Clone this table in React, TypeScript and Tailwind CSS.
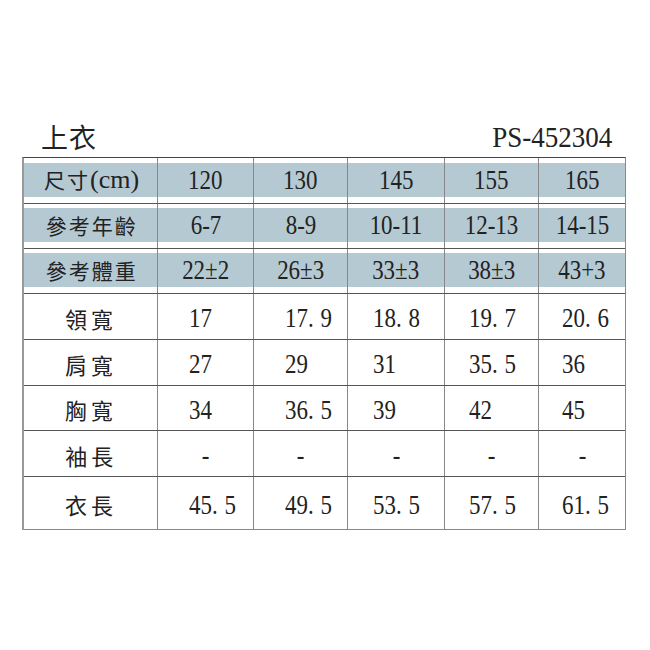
import React from 'react';

const cjk = "font-['Noto_Sans_CJK_TC','Noto_Sans_CJK_JP',sans-serif]";
const serif = "font-['Liberation_Serif',serif]";

const colWidths = ['w-[134px]', 'w-[96px]', 'w-[95px]', 'w-[97px]', 'w-[95px]', 'w-[87px]'];
const dataPad = ['pl-[31px]', 'pl-[31px]', 'pl-[25px]', 'pl-[24px]', 'pl-[23px]'];

const headerRows = [
  { label: '尺寸', unit: '(cm)', values: ['120', '130', '145', '155', '165'], pt: 'pt-[5px]' },
  { label: '參考年齡', values: ['6-7', '8-9', '10-11', '12-13', '14-15'], pt: 'pt-[4px]' },
  { label: '參考體重', values: ['22±2', '26±3', '33±3', '38±3', '43+3'], pt: 'pt-[4px]' },
];

const sizeRows = [
  { label: '領寬', values: ['17', '17.9', '18.8', '19.7', '20.6'], h: 'h-[46px]' },
  { label: '肩寬', values: ['27', '29', '31', '35.5', '36'], h: 'h-[46px]' },
  { label: '胸寬', values: ['34', '36.5', '39', '42', '45'], h: 'h-[45px]' },
  { label: '袖長', values: ['-', '-', '-', '-', '-'], h: 'h-[46px]' },
  { label: '衣長', values: ['45.5', '49.5', '53.5', '57.5', '61.5'], h: 'h-[53px]' },
];

const Num = ({ text, left }: { text: string; left?: boolean }) => {
  const parts = text.split('.');
  return (
    <span
      className={`inline-block ${serif} text-[27px] leading-none text-[#222] scale-x-[0.85] ${
        left ? 'origin-left' : 'origin-center'
      }`}
    >
      {parts.length > 1 ? (
        <>
          {parts[0]}
          <span className="pr-[8px]">.</span>
          {parts[1]}
        </>
      ) : (
        text
      )}
    </span>
  );
};

export default function App() {
  return (
    <div className="w-[650px] h-[650px] bg-white">
      <div className="ml-[22px] w-[604px] pt-[116px]">
        <div className="flex items-center justify-between h-[41px] pl-[19px] pr-[14px]">
          <span className={`${cjk} text-[27px] leading-none text-[#222] tracking-[1px]`}>上衣</span>
          <span className={`${serif} text-[30px] leading-none text-[#222] inline-block scale-x-[0.9] origin-right`}>
            PS-452304
          </span>
        </div>

        <div className="border-t border-[#444] border-l-2 border-l-[#999] border-r border-r-[#888]">
          {headerRows.map((row, ri) => (
            <div key={ri} className="flex border-b border-[#555]">
              {[null, ...row.values].map((v, ci) => (
                <div
                  key={ci}
                  className={`${colWidths[ci]} ${row.pt} pb-[6px] ${ci > 0 ? 'border-l border-[#888]' : ''}`}
                >
                  <div className="h-[34px] bg-[#b5c9d2] flex items-center justify-center">
                    {ci === 0 ? (
                      <span className={`${cjk} text-[21px] leading-none tracking-[2px] text-[#222] pl-[2px]`}>
                        {row.label}
                        {row.unit && (
                          <span className={`${serif} text-[26px] tracking-normal`}>{row.unit}</span>
                        )}
                      </span>
                    ) : (
                      <Num text={v as string} />
                    )}
                  </div>
                </div>
              ))}
            </div>
          ))}

          {sizeRows.map((row, ri) => (
            <div key={ri} className={`flex ${row.h} border-b ${ri === sizeRows.length - 1 ? 'border-[#888]' : 'border-[#555]'}`}>
              <div className={`${colWidths[0]} flex items-center justify-center pt-[2px]`}>
                <span className={`${cjk} text-[22px] leading-none tracking-[4px] text-[#222] pl-[1px]`}>
                  {row.label}
                </span>
              </div>
              {row.values.map((v, ci) => (
                <div
                  key={ci}
                  className={`${colWidths[ci + 1]} border-l border-[#888] flex items-center pt-[4px] ${
                    v === '-' ? 'justify-center' : dataPad[ci]
                  }`}
                >
                  <Num text={v} left={v !== '-'} />
                </div>
              ))}
            </div>
          ))}
        </div>
      </div>
    </div>
  );
}
